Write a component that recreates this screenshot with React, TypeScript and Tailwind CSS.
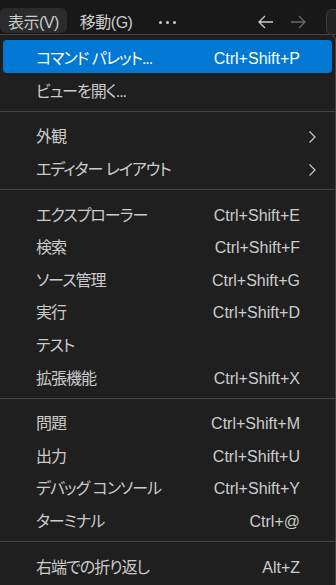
import { ReactNode } from "react";

type Entry =
  | { kind: "item"; label: string; shortcut?: string; submenu?: boolean; active?: boolean }
  | { kind: "sep" };

const entries: Entry[] = [
  { kind: "item", label: "コマンド パレット...", shortcut: "Ctrl+Shift+P", active: true },
  { kind: "item", label: "ビューを開く..." },
  { kind: "sep" },
  { kind: "item", label: "外観", submenu: true },
  { kind: "item", label: "エディター レイアウト", submenu: true },
  { kind: "sep" },
  { kind: "item", label: "エクスプローラー", shortcut: "Ctrl+Shift+E" },
  { kind: "item", label: "検索", shortcut: "Ctrl+Shift+F" },
  { kind: "item", label: "ソース管理", shortcut: "Ctrl+Shift+G" },
  { kind: "item", label: "実行", shortcut: "Ctrl+Shift+D" },
  { kind: "item", label: "テスト" },
  { kind: "item", label: "拡張機能", shortcut: "Ctrl+Shift+X" },
  { kind: "sep" },
  { kind: "item", label: "問題", shortcut: "Ctrl+Shift+M" },
  { kind: "item", label: "出力", shortcut: "Ctrl+Shift+U" },
  { kind: "item", label: "デバッグ コンソール", shortcut: "Ctrl+Shift+Y" },
  { kind: "item", label: "ターミナル", shortcut: "Ctrl+@" },
  { kind: "sep" },
  { kind: "item", label: "右端での折り返し", shortcut: "Alt+Z" },
];

function Chevron() {
  return (
    <svg width="9" height="14" viewBox="0 0 9 14" fill="none">
      <path d="M1.5 1.5 L7 7 L1.5 12.5" stroke="#cccccc" strokeWidth="1.2" />
    </svg>
  );
}

function Arrow({ dir, color }: { dir: "left" | "right"; color: string }) {
  return (
    <svg width="16" height="14" viewBox="0 0 16 14" fill="none">
      {dir === "left" ? (
        <path d="M7 1 L1 7 L7 13 M1 7 H15" stroke={color} strokeWidth="1.3" />
      ) : (
        <path d="M9 1 L15 7 L9 13 M1 7 H15" stroke={color} strokeWidth="1.3" />
      )}
    </svg>
  );
}

function TitleButton({ children, active }: { children: ReactNode; active?: boolean }) {
  return (
    <div
      className={`h-[25px] flex items-center pt-[4px] px-[8px] rounded-[6px] text-[16px] tracking-[-0.5px] text-[#cccccc] ${
        active ? "bg-[#2b2b2b]" : ""
      }`}
    >
      {children}
    </div>
  );
}

export default function App() {
  return (
    <div
      className="w-[336px] h-[585px] overflow-hidden bg-[#181818] [font-feature-settings:'palt']"
      style={{ fontFamily: '"Liberation Sans", "Noto Sans CJK JP", sans-serif' }}
    >
      {/* タイトルバー */}
      <div className="h-[34px] flex items-start pt-[8px] relative">
        <TitleButton active>表示(V)</TitleButton>
        <div className="ml-[5px]">
          <TitleButton>移動(G)</TitleButton>
        </div>
        <div className="ml-[19px] h-[25px] pt-[3px] flex items-center gap-[4px]">
          <span className="w-[3px] h-[3px] rounded-full bg-[#cccccc]" />
          <span className="w-[3px] h-[3px] rounded-full bg-[#cccccc]" />
          <span className="w-[3px] h-[3px] rounded-full bg-[#cccccc]" />
        </div>
        <div className="ml-auto h-[25px] pt-[3px] flex items-center gap-[16px] mr-[30px]">
          <Arrow dir="left" color="#cccccc" />
          <Arrow dir="right" color="#6b6b6b" />
        </div>
        <div className="absolute left-[326px] top-[9px] w-[40px] h-[26px] rounded-[6px] border border-[#3c3c3c] bg-[#242424]" />
      </div>

      {/* メニュー */}
      <div className="h-[551px] bg-[#1f1f1f] border-t border-r border-[#454545] rounded-tr-[6px] w-[336px] pt-[5px]">
        {entries.map((e, i) =>
          e.kind === "sep" ? (
            <div key={i} className="h-[13px] flex items-center">
              <div className="w-full h-px bg-[#454545]" />
            </div>
          ) : (
            <div
              key={i}
              className={`mx-[3px] h-[32.6px] flex items-center rounded-[4px] pt-[6px] pl-[33px] text-[16px] ${
                e.active ? "bg-[#0078d4] text-white" : "text-[#cccccc]"
              } ${e.submenu ? "pr-[15px]" : "pr-[32px]"}`}
            >
              <span className="flex-1 whitespace-nowrap tracking-[-1px]">{e.label}</span>
              {e.shortcut && <span className="whitespace-nowrap">{e.shortcut}</span>}
              {e.submenu && <Chevron />}
            </div>
          )
        )}
      </div>
    </div>
  );
}
